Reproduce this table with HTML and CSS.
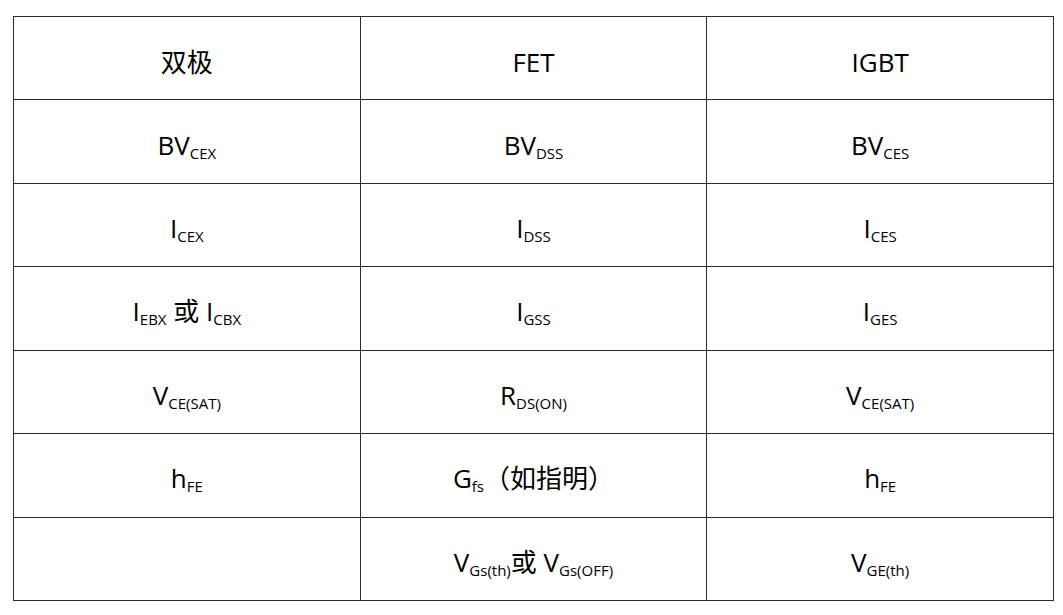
FILE: index.html
```html
<!DOCTYPE html>
<html lang="zh">
<head>
<meta charset="utf-8">
<link rel="stylesheet" href="styles.css">
</head>
<body>
<table class="grid">
  <tr><td>双极</td><td>FET</td><td>IGBT</td></tr>
  <tr><td>BV<sub>CEX</sub></td><td>BV<sub>DSS</sub></td><td>BV<sub>CES</sub></td></tr>
  <tr><td>I<sub>CEX</sub></td><td>I<sub>DSS</sub></td><td>I<sub>CES</sub></td></tr>
  <tr><td>I<sub>EBX</sub> 或 I<sub>CBX</sub></td><td>I<sub>GSS</sub></td><td>I<sub>GES</sub></td></tr>
  <tr><td>V<sub>CE(SAT)</sub></td><td>R<sub>DS(ON)</sub></td><td>V<sub>CE(SAT)</sub></td></tr>
  <tr><td>h<sub>FE</sub></td><td>G<sub>fs</sub>（如指明）</td><td>h<sub>FE</sub></td></tr>
  <tr><td></td><td>V<sub>Gs(th)</sub>或 V<sub>Gs(OFF)</sub></td><td>V<sub>GE(th)</sub></td></tr>
</table>
</body>
</html>
```
FILE: styles.css
```css
html, body {
  margin: 0;
  padding: 0;
  background: #ffffff;
}
body {
  padding: 16px 0 0 13px;
  font-family: "Open Sans", "Noto Sans CJK SC", sans-serif;
  color: #000;
}
.grid {
  border-collapse: collapse;
  table-layout: fixed;
  width: 1041px;
}
.grid td {
  border: 1px solid #2a2a2a;
  height: 83.43px;
  padding: 7px 0 0 0;
  text-align: center;
  vertical-align: middle;
  font-size: 26px;
  font-weight: 400;
  line-height: 30px;
  width: 33.33%;
  box-sizing: border-box;
}
.grid sub {
  font-size: 15px;
  vertical-align: -4px;
  line-height: 1;
}
```
